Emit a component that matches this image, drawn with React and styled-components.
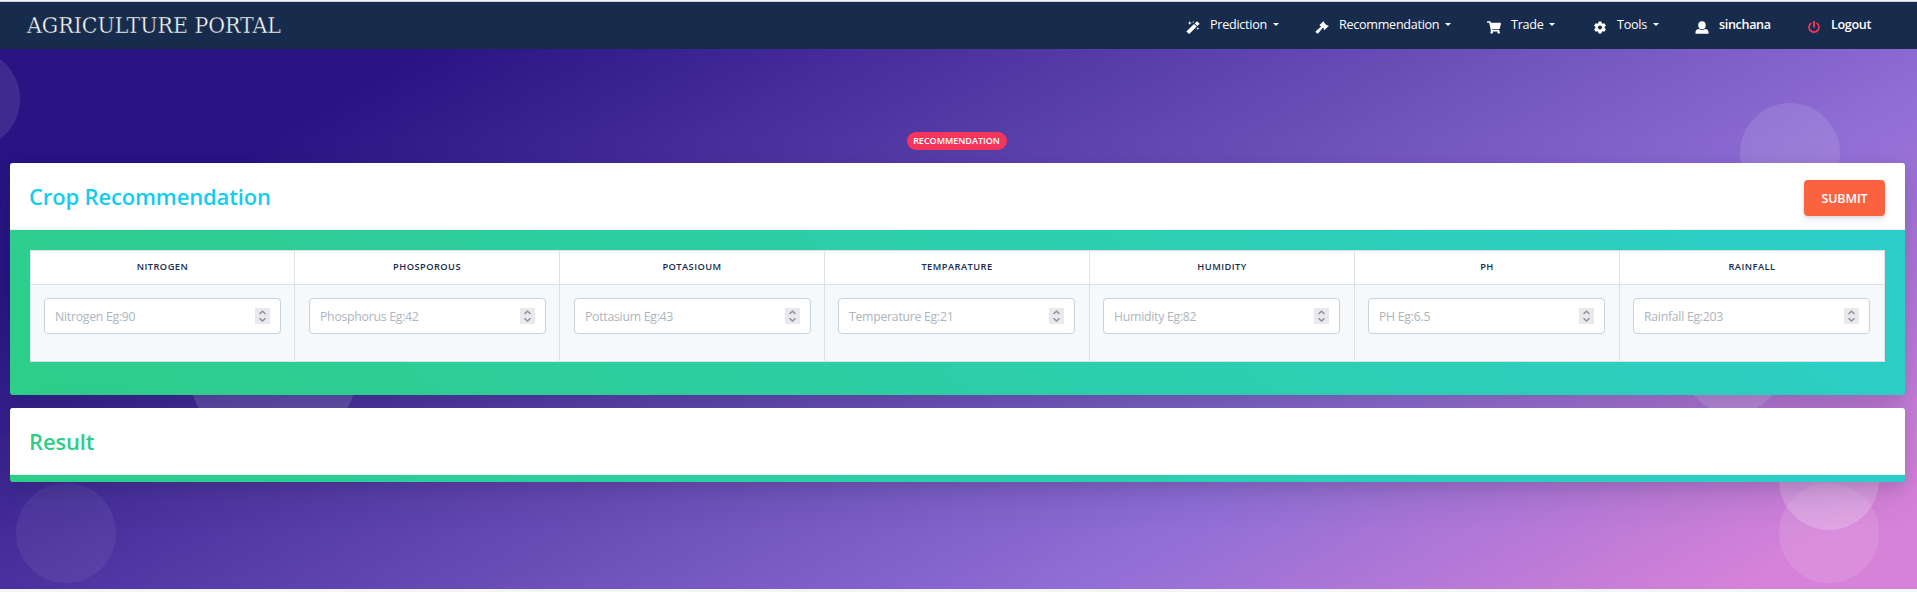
import React from 'react';
import styled, { createGlobalStyle } from 'styled-components';

const GlobalStyle = createGlobalStyle`
  *, *::before, *::after { box-sizing: border-box; }
  body {
    margin: 0;
    background: #f4f5f7;
    color: #525f7f;
    font-family: "Open Sans", sans-serif;
    font-size: 16px;
    line-height: 1.5;
    overflow: hidden;
  }
`;

const Page = styled.div`
  height: 592px;
  border-top: 1px solid #f4f5f7;
`;

const Navbar = styled.nav`
  height: 48px;
  display: flex;
  align-items: center;
  justify-content: space-between;
  padding: 0 46px 0 27px;
  background: #172b4d;
  border-top: 1px solid #c9ced6;
`;

const Brand = styled.a`
  font-family: "DejaVu Serif Condensed", "DejaVu Serif", serif;
  font-stretch: condensed;
  font-size: 22.8px;
  line-height: 44px;
  padding-bottom: 1px;
  color: #fffff8;
  white-space: nowrap;
  -webkit-text-stroke: 0.4px #172b4d;
`;

const NavList = styled.ul`
  display: flex;
  list-style: none;
  margin: 0;
  padding: 0;
`;

const NavItem = styled.li`
  display: flex;
  align-items: center;
  height: 46px;
  padding-bottom: 1px;
  width: ${(p) => p.$width}px;
  color: #fff;
  font-size: 12.6px;
  font-weight: ${(p) => (p.$strong ? 600 : 400)};
  letter-spacing: ${(p) => (p.$strong ? -0.35 : -0.28)}px;
  white-space: nowrap;

  svg {
    width: 14px;
    height: 13px;
    margin: 4px 10px 0 0;
    fill: ${(p) => p.$tone || '#fff'};
    flex: none;
  }
`;

const Caret = styled.span`
  margin: -1px 0 0 6px;
  border: 3px solid transparent;
  border-top-color: #fff;
  border-bottom: 0;
`;

const Hero = styled.section`
  position: relative;
  height: 540px;
  overflow: hidden;
  padding: 83px 12px 0 10px;
  background: linear-gradient(150deg, #281483 15%, #8f6ed5 70%, #d782d9 94%);
`;

const Bubble = styled.span`
  position: absolute;
  left: ${(p) => p.$x}px;
  top: ${(p) => p.$y}px;
  width: ${(p) => p.$size || 100}px;
  height: ${(p) => p.$size || 100}px;
  border-radius: 50%;
  background: rgba(255, 255, 255, ${(p) => p.$alpha});
`;

const Content = styled.div`
  position: relative;
  display: flex;
  flex-direction: column;
`;

const Badge = styled.span`
  align-self: center;
  width: 100px;
  height: 18px;
  border-radius: 10px;
  background: #f5365c;
  color: #fff;
  font-size: 9px;
  font-weight: 600;
  line-height: 17px;
  text-align: center;
  margin: 0 2px 13px 0;
`;

const Card = styled.div`
  height: ${(p) => p.$height}px;
  margin-bottom: 13px;
  border-radius: 3px;
  overflow: hidden;
  background: linear-gradient(45deg, #2dce89, #2dcecc);
  box-shadow: 0 15px 35px rgba(50, 50, 93, 0.14), 0 5px 15px rgba(0, 0, 0, 0.1);
`;

const CardHeader = styled.header`
  height: 67px;
  display: flex;
  align-items: center;
  justify-content: space-between;
  padding: 0 20px 0 19px;
  background: #fff;
  border-bottom: 1px solid #f2f2f2;
`;

const Title = styled.h2`
  margin: 0;
  color: ${(p) => p.$color};
  font-size: 22px;
  font-weight: 600;
  letter-spacing: -0.15px;
  line-height: 30px;
`;

const SubmitButton = styled.button`
  width: 81px;
  height: 36px;
  margin-top: 3px;
  padding: 1px 0 0;
  border: 0;
  border-radius: 4px;
  background: #fb6340;
  color: #fff;
  font: 600 12.5px "Open Sans", sans-serif;
  letter-spacing: -0.1px;
  box-shadow: 0 4px 6px rgba(50, 50, 93, 0.11), 0 1px 3px rgba(0, 0, 0, 0.08);
`;

const Table = styled.div`
  display: grid;
  grid-template-columns: 264px repeat(6, 265px);
  width: 1855px;
  margin: 20px 20px 0;
  border: 1px solid #dee2e6;
  border-left: 0;
  background: #f6f9fc;
`;

const Column = styled.div`
  border-left: 1px solid #dee2e6;
`;

const ColumnHead = styled.div`
  height: 34px;
  background: #fff;
  border-bottom: 1px solid #dee2e6;
  color: #172b4d;
  font-size: 9.3px;
  font-weight: 600;
  letter-spacing: 0.45px;
  line-height: 32px;
  text-align: center;
`;

const Field = styled.label`
  display: flex;
  align-items: center;
  justify-content: space-between;
  width: 237px;
  height: 36px;
  margin: 13px 0 27px 13px;
  padding: 0 10px;
  border: 1px solid #cad1d7;
  border-radius: 4px;
  background: #fff;
  color: #adb5bd;
  font-size: 12.3px;
  letter-spacing: -0.28px;

  ${Column}:nth-child(2) &,
  ${Column}:nth-child(3) & {
    margin-left: 14px;
  }
`;

const Hint = styled.span`
  padding-top: 2px;
`;

const Stepper = styled.span`
  width: 15px;
  height: 16px;
  display: flex;
  background: #e9e9ed;

  svg {
    width: 15px;
    height: 16px;
    fill: none;
    stroke: #8f8f9d;
    stroke-width: 1.5;
  }
`;

const icons = {
  wand: (
    <svg viewBox="0 0 14 13">
      <path d="M.3 10.500 8 2.900l2.800 2.600L3.200 13zM8.700 2.400 11 .2l2.700 2.500-2.300 2.300zM3.800 0l.6 1.400 1.400.6-1.400.6-.6 1.400-.6-1.400L1.800 2l1.400-.6zM7.200 0l.3.7.7.3-.7.3-.3.7-.3-.7-.7-.3.7-.3zM11.800 6l.4 1.200 1.200.4-1.200.4-.4 1.200-.4-1.200-1.200-.4 1.200-.4z" />
    </svg>
  ),
  gavel: (
    <svg viewBox="0 0 14 13">
      <path d="M4.500 4.100 8.400.3l.9.600-.2.900 3 2.700.9-.2.700.800-4.300 3.900-.8-.7.200-.9-.8-.8-4.700 5.600a1.200 1.200 0 0 1-1.600 0l-.7-.7a1.200 1.200 0 0 1 0-1.600l5.200-4.300-.4-.5-.7.200z" />
    </svg>
  ),
  cart: (
    <svg viewBox="0 0 576 512">
      <path d="M528.100 301.300l47.300-208C578.800 78.300 567.400 64 552 64H159.200l-9.200-44.800C147.800 8 137.900 0 126.500 0H24C10.700 0 0 10.700 0 24v16c0 13.300 10.700 24 24 24h69.900l70.200 343.400C147.300 417.100 136 435.200 136 456c0 30.900 25.100 56 56 56s56-25.100 56-56c0-15.700-6.400-29.800-16.800-40h209.600C430.400 426.200 424 440.300 424 456c0 30.900 25.100 56 56 56s56-25.100 56-56c0-22.200-12.900-41.300-31.600-50.400l5.500-24.300c3.400-15-8-29.300-23.400-29.300H218.100l-6.500-32h293.100c11.200 0 20.900-7.800 23.400-18.700z" />
    </svg>
  ),
  cog: (
    <svg viewBox="0 0 14 13">
      <path fillRule="evenodd" d="M5.500.5h3l.3 1.700 1 .6 1.600-.6 1.500 2.500-1.300 1.100v1.300l1.300 1.100-1.500 2.600-1.600-.6-1 .6-.3 1.700h-3l-.3-1.700-1-.6-1.600.6-1.500-2.600 1.300-1.100V5.800L1.100 4.700l1.500-2.500 1.600.6 1-.6zM7 4.500a2 2 0 1 0 0 4 2 2 0 0 0 0-4z" />
    </svg>
  ),
  user: (
    <svg viewBox="0 0 14 13">
      <ellipse cx="7" cy="4.200" rx="3.700" ry="4" />
      <path d="M.5 12.800v-1.600c0-2.300 1.700-3.200 3.500-3.300A5 5 0 0 0 7 8.900a5 5 0 0 0 3-1c1.800.1 3.500 1 3.500 3.300v1.600z" />
    </svg>
  ),
  power: (
    <svg viewBox="0 0 14 13">
      <path d="M4 1.200A5.800 5.800 0 1 0 10 1.200l-.8 1.500a4.100 4.100 0 1 1-4.400 0zM6 .1h2v6.400H6z" />
    </svg>
  ),
};

const navItems = [
  { icon: 'wand', label: 'Prediction', width: 129, caret: true },
  { icon: 'gavel', label: 'Recommendation', width: 172, caret: true },
  { icon: 'cart', label: 'Trade', width: 106, caret: true },
  { icon: 'cog', label: 'Tools', width: 102, caret: true },
  { icon: 'user', label: 'sinchana', width: 112, strong: true },
  { icon: 'power', label: 'Logout', width: 64, strong: true, tone: '#f5365c' },
];

const fields = [
  ['NITROGEN', 'Nitrogen Eg:90'],
  ['PHOSPOROUS', 'Phosphorus Eg:42'],
  ['POTASIOUM', 'Pottasium Eg:43'],
  ['TEMPARATURE', 'Temperature Eg:21'],
  ['HUMIDITY', 'Humidity Eg:82'],
  ['PH', 'PH Eg:6.5'],
  ['RAINFALL', 'Rainfall Eg:203'],
];

export default function App() {
  return (
    <Page>
      <GlobalStyle />
      <Navbar>
        <Brand>AGRICULTURE PORTAL</Brand>
        <NavList>
          {navItems.map((item) => (
            <NavItem key={item.label} $width={item.width} $strong={item.strong} $tone={item.tone}>
              {icons[item.icon]}
              {item.label}
              {item.caret && <Caret />}
            </NavItem>
          ))}
        </NavList>
      </Navbar>
      <Hero>
        <Bubble $x={-80} $y={0} $alpha={0.1} />
        <Bubble $x={1740} $y={54} $alpha={0.11} />
        <Bubble $x={188} $y={233} $size={170} $alpha={0.15} />
        <Bubble $x={1683} $y={265} $alpha={0.15} />
        <Bubble $x={1779} $y={381} $alpha={0.2} />
        <Bubble $x={1779} $y={434} $alpha={0.1} />
        <Bubble $x={16} $y={434} $alpha={0.06} />
        <Content>
          <Badge>RECOMMENDATION</Badge>
          <Card $height={232}>
            <CardHeader>
              <Title $color="#11cdef">Crop Recommendation</Title>
              <SubmitButton>SUBMIT</SubmitButton>
            </CardHeader>
            <Table>
              {fields.map(([name, hint]) => (
                <Column key={name}>
                  <ColumnHead>{name}</ColumnHead>
                  <Field>
                    <Hint>{hint}</Hint>
                    <Stepper>
                      <svg viewBox="0 0 15 16">
                        <path d="M4.500 6 7.500 3.300 10.500 6M4.500 10.300l3 2.700 3-2.700" />
                      </svg>
                    </Stepper>
                  </Field>
                </Column>
              ))}
            </Table>
          </Card>
          <Card $height={74}>
            <CardHeader>
              <Title $color="#2dce89">Result</Title>
            </CardHeader>
          </Card>
        </Content>
      </Hero>
    </Page>
  );
}
